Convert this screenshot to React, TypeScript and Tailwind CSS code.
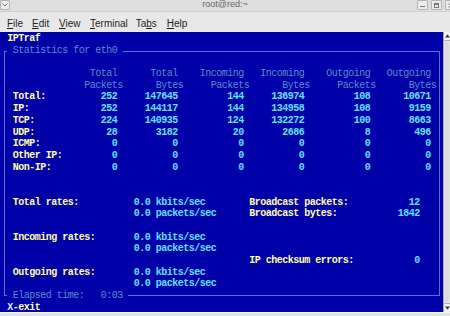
import React from "react";

const LAB = "text-[#ffffa8] font-bold";
const VAL = "text-[#60e2ff] font-bold";
const HEAD = "text-[#5a8cc8]";
const BGC = "bg-[#0000a8]";

const rows: [string, number[]][] = [
  ["Total:", [252, 147645, 144, 136974, 108, 10671]],
  ["IP:", [252, 144117, 144, 134958, 108, 9159]],
  ["TCP:", [224, 140935, 124, 132272, 100, 8663]],
  ["UDP:", [28, 3182, 20, 2686, 8, 496]],
  ["ICMP:", [0, 0, 0, 0, 0, 0]],
  ["Other IP:", [0, 0, 0, 0, 0, 0]],
  ["Non-IP:", [0, 0, 0, 0, 0, 0]],
];
const widths = [6, 11, 12, 11, 12, 11];

function Line({ children }: { children?: React.ReactNode }) {
  return (
    <div className="relative h-[11.69px] leading-[11.69px] whitespace-pre">
      {children}
    </div>
  );
}

function fields(items: (string | number)[]) {
  return items.map((t, i) => String(t).padStart(widths[i])).join("");
}

function Arrow({ up }: { up?: boolean }) {
  return (
    <svg width="5" height="4" viewBox="0 0 5 4">
      <path d={up ? "M0 3.5 L2.5 0.5 L5 3.5 Z" : "M0 0.5 L2.5 3.5 L5 0.5 Z"} fill="#333" />
    </svg>
  );
}

export default function App() {
  const menu: [string, string, string, string][] = [
    ["", "F", "ile", "w-[25px]"],
    ["", "E", "dit", "w-[27px]"],
    ["", "V", "iew", "w-[31px]"],
    ["", "T", "erminal", "w-[45.7px]"],
    ["Ta", "b", "s", "w-[31px]"],
    ["", "H", "elp", "w-[30px]"],
  ];
  return (
    <div className="w-[450px] h-[316px] overflow-hidden bg-[#e4e4e4] flex flex-col">
      {/* title bar */}
      <div className="h-[11px] bg-[#dedede] flex items-start justify-between relative">
        <div className="w-[10px] h-[10px] border border-[#b4b4b4] bg-[#ececec] rounded-[1px] flex items-center justify-center">
          <svg width="6" height="4" viewBox="0 0 6 4">
            <path d="M0.5 0.5 L3 3 L5.5 0.5" stroke="#777" fill="none" strokeWidth="1" />
          </svg>
        </div>
        <div className="absolute left-0 right-0 top-[-1px] text-center text-[9px] leading-[11px] text-[#666] font-['Liberation_Sans',sans-serif]">
          root@red:~
        </div>
        <div className="flex gap-[3px] mr-[-6px]">
          <div className="w-[11px] h-[10px] border border-[#b4b4b4] bg-[#ececec] rounded-[1px] flex items-end justify-center pb-[2px]">
            <div className="w-[5px] h-[1.5px] bg-[#777]" />
          </div>
          <div className="w-[11px] h-[10px] border border-[#b4b4b4] bg-[#ececec] rounded-[1px] flex items-center justify-center">
            <div className="w-[5px] h-[5px] border border-[#777] border-t-2" />
          </div>
          <div className="w-[11px] h-[10px] border border-[#b4b4b4] bg-[#ececec] rounded-[1px] flex items-center justify-center">
            <svg width="5" height="5" viewBox="0 0 5 5">
              <path d="M0.5 0.5 L4.5 4.5 M4.5 0.5 L0.5 4.5" stroke="#777" strokeWidth="1" />
            </svg>
          </div>
        </div>
      </div>
      <div className="h-px bg-[#cfcfcf]" />
      {/* menu bar */}
      <div className="h-[19.5px] bg-[#e8e8e8] flex items-center pt-[3px] pl-[7px] font-['Liberation_Sans',sans-serif] text-[10px] text-[#1e1e1e]">
        {menu.map(([a, u, b, w], i) => (
          <span key={i} className={`${w} whitespace-pre`}>
            {a}
            <span className="underline underline-offset-[1px]">{u}</span>
            {b}
          </span>
        ))}
      </div>
      {/* terminal + scrollbar */}
      <div className="h-[280.5px] flex">
        <div className={`w-[443px] ${BGC} pl-[1.7px] pt-[1.5px] font-['Liberation_Mono',monospace] text-[10px] tracking-[-0.5px] overflow-hidden`}>
          <Line>
            <span className={LAB}> IPTraf</span>
          </Line>
          <div className="relative">
            <div className="absolute top-[5.85px] bottom-[5.85px] left-[2.75px] w-[435.5px] border border-[#5a70d8]" />
            <Line>
              <span> </span>
              <span className={`${HEAD} ${BGC}`}> Statistics for eth0 </span>
            </Line>
            <Line />
            <Line>
              <span className={HEAD}>{" ".repeat(15) + fields(["Total", "Total", "Incoming", "Incoming", "Outgoing", "Outgoing"])}</span>
            </Line>
            <Line>
              <span className={HEAD}>{" ".repeat(15) + fields(["Packets", "Bytes", "Packets", "Bytes", "Packets", "Bytes"])}</span>
            </Line>
            {rows.map(([label, nums]) => (
              <Line key={label}>
                <span className={LAB}>{("  " + label).padEnd(15)}</span>
                <span className={VAL}>{fields(nums)}</span>
              </Line>
            ))}
            <Line />
            <Line />
            <Line>
              <span className={LAB}>{"  Total rates:".padEnd(24)}</span>
              <span className={VAL}>{"0.0 kbits/sec".padEnd(21)}</span>
              <span className={LAB}>Broadcast packets:</span>
              <span className={VAL}>{"12".padStart(13)}</span>
            </Line>
            <Line>
              <span>{" ".repeat(24)}</span>
              <span className={VAL}>{"0.0 packets/sec".padEnd(21)}</span>
              <span className={LAB}>{"Broadcast bytes:".padEnd(18)}</span>
              <span className={VAL}>{"1842".padStart(13)}</span>
            </Line>
            <Line />
            <Line>
              <span className={LAB}>{"  Incoming rates:".padEnd(24)}</span>
              <span className={VAL}>0.0 kbits/sec</span>
            </Line>
            <Line>
              <span>{" ".repeat(24)}</span>
              <span className={VAL}>0.0 packets/sec</span>
            </Line>
            <Line>
              <span>{" ".repeat(45)}</span>
              <span className={LAB}>IP checksum errors:</span>
              <span className={VAL}>{"0".padStart(12)}</span>
            </Line>
            <Line>
              <span className={LAB}>{"  Outgoing rates:".padEnd(24)}</span>
              <span className={VAL}>0.0 kbits/sec</span>
            </Line>
            <Line>
              <span>{" ".repeat(24)}</span>
              <span className={VAL}>0.0 packets/sec</span>
            </Line>
            <Line>
              <span> </span>
              <span className={`${HEAD} ${BGC}`}> Elapsed time:   0:03 </span>
            </Line>
          </div>
          <Line>
            <span> </span>
            <span className="text-[#d8ecff] font-bold">X</span>
            <span className={LAB}>-exit</span>
          </Line>
        </div>
        <div className="flex-1 bg-[#e6e6e6] border-l border-[#a8a8a8] flex flex-col justify-between">
          <div className="h-[9px] border-b border-[#b0b0b0] bg-[#f0f0f0] flex items-center justify-center">
            <Arrow up />
          </div>
          <div className="flex-1 mx-px my-px bg-[#dadada]" />
          <div className="h-[9px] border-t border-[#b0b0b0] bg-[#f0f0f0] flex items-center justify-center">
            <Arrow />
          </div>
        </div>
      </div>
      <div className="flex-1 bg-[#e2e2e2] border-t border-[#f4f4f4]" />
    </div>
  );
}
